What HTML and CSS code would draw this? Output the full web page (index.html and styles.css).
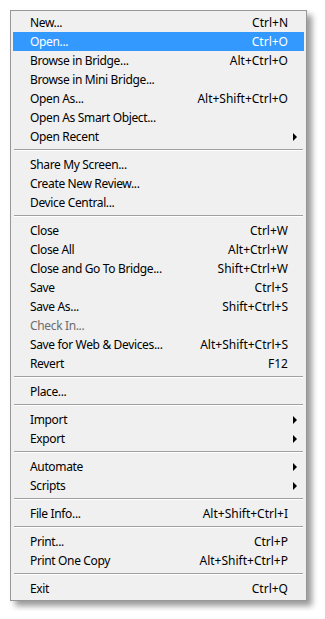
FILE: index.html
```html
<!DOCTYPE html>
<html lang="en">
<head>
    <meta charset="UTF-8">
    <title>File Menu</title>
    <link rel="stylesheet" href="styles.css">
</head>
<body>
    <div class="menu">
        <div class="item"><span>New...</span><span class="key">Ctrl+N</span></div>
        <div class="item active"><span>Open...</span><span class="key">Ctrl+O</span></div>
        <div class="item"><span>Browse in Bridge...</span><span class="key">Alt+Ctrl+O</span></div>
        <div class="item"><span>Browse in Mini Bridge...</span></div>
        <div class="item"><span>Open As...</span><span class="key">Alt+Shift+Ctrl+O</span></div>
        <div class="item"><span>Open As Smart Object...</span></div>
        <div class="item sub"><span>Open Recent</span></div>
        <div class="sep"></div>
        <div class="item"><span>Share My Screen...</span></div>
        <div class="item"><span>Create New Review...</span></div>
        <div class="item"><span>Device Central...</span></div>
        <div class="sep"></div>
        <div class="item"><span>Close</span><span class="key">Ctrl+W</span></div>
        <div class="item"><span>Close All</span><span class="key">Alt+Ctrl+W</span></div>
        <div class="item"><span>Close and Go To Bridge...</span><span class="key">Shift+Ctrl+W</span></div>
        <div class="item"><span>Save</span><span class="key">Ctrl+S</span></div>
        <div class="item"><span>Save As...</span><span class="key">Shift+Ctrl+S</span></div>
        <div class="item disabled"><span>Check In...</span></div>
        <div class="item"><span>Save for Web &amp; Devices...</span><span class="key">Alt+Shift+Ctrl+S</span></div>
        <div class="item"><span>Revert</span><span class="key">F12</span></div>
        <div class="sep"></div>
        <div class="item"><span>Place...</span></div>
        <div class="sep"></div>
        <div class="item sub"><span>Import</span></div>
        <div class="item sub"><span>Export</span></div>
        <div class="sep"></div>
        <div class="item sub"><span>Automate</span></div>
        <div class="item sub"><span>Scripts</span></div>
        <div class="sep"></div>
        <div class="item"><span>File Info...</span><span class="key">Alt+Shift+Ctrl+I</span></div>
        <div class="sep"></div>
        <div class="item"><span>Print...</span><span class="key">Ctrl+P</span></div>
        <div class="item"><span>Print One Copy</span><span class="key">Alt+Shift+Ctrl+P</span></div>
        <div class="sep"></div>
        <div class="item"><span>Exit</span><span class="key">Ctrl+Q</span></div>
    </div>
</body>
</html>
```

FILE: styles.css
```css
* {
    margin: 0;
    padding: 0;
    box-sizing: border-box;
}

body {
    background: #ffffff;
    padding: 10px;
    font-family: "Noto Sans", sans-serif;
    font-size: 12px;
    letter-spacing: -0.35px;
}

.menu {
    width: 297px;
    padding: 2px;
    background: #f0f0f0;
    border: 1px solid #979797;
    box-shadow: 5px 5px 6px rgba(0, 0, 0, 0.4);
}

.item {
    position: relative;
    display: flex;
    justify-content: space-between;
    height: 19px;
    line-height: 19px;
    padding: 0 16px 0 17px;
    color: #000000;
    white-space: nowrap;
}

.key {
    letter-spacing: 0;
}

.item.active {
    background: #3399ff;
    color: #ffffff;
}

.item.disabled {
    color: #6d6d6d;
}

.sub::after {
    content: "";
    position: absolute;
    right: 7px;
    top: 6px;
    border-left: 4px solid #000000;
    border-top: 4px solid transparent;
    border-bottom: 4px solid transparent;
}

.sep {
    height: 9px;
    padding: 3px 1px 0 1px;
}

.sep::before {
    content: "";
    display: block;
    height: 1px;
    background: #a0a0a0;
    border-bottom: 1px solid #ffffff;
    box-sizing: content-box;
}
```
